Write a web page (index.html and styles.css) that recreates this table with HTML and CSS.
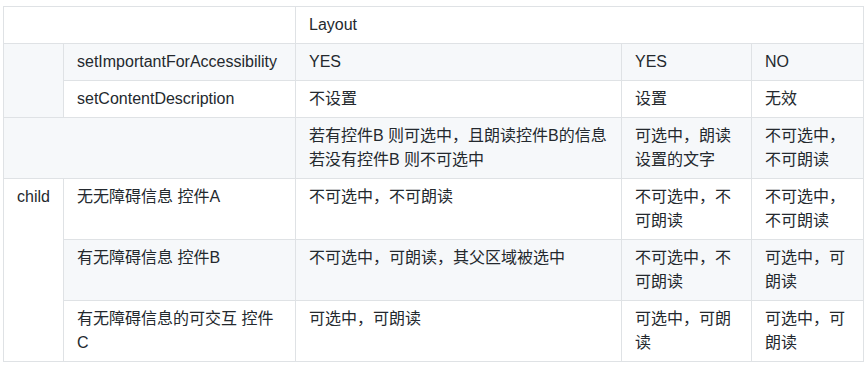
FILE: index.html
```html
<!DOCTYPE html>
<html lang="zh-CN">
<head>
<meta charset="utf-8">
<title>Accessibility table</title>
<link rel="stylesheet" href="styles.css">
</head>
<body>
<table class="grid">
  <colgroup>
    <col class="c1">
    <col class="c2">
    <col class="c3">
    <col class="c4">
    <col class="c5">
  </colgroup>
  <tbody>
    <tr>
      <td colspan="2"></td>
      <td colspan="3">Layout</td>
    </tr>
    <tr class="alt">
      <td rowspan="2"></td>
      <td>setImportantForAccessibility</td>
      <td>YES</td>
      <td>YES</td>
      <td>NO</td>
    </tr>
    <tr>
      <td>setContentDescription</td>
      <td>不设置</td>
      <td>设置</td>
      <td>无效</td>
    </tr>
    <tr class="alt">
      <td colspan="2"></td>
      <td>若有控件B 则可选中，且朗读控件B的信息<br>若没有控件B 则不可选中</td>
      <td>可选中，朗读设置的文字</td>
      <td>不可选中，不可朗读</td>
    </tr>
    <tr>
      <td rowspan="3">child</td>
      <td>无无障碍信息 控件A</td>
      <td>不可选中，不可朗读</td>
      <td>不可选中，不可朗读</td>
      <td>不可选中，不可朗读</td>
    </tr>
    <tr class="alt">
      <td>有无障碍信息 控件B</td>
      <td>不可选中，可朗读，其父区域被选中</td>
      <td>不可选中，不可朗读</td>
      <td>可选中，可朗读</td>
    </tr>
    <tr>
      <td>有无障碍信息的可交互 控件C</td>
      <td>可选中，可朗读</td>
      <td>可选中，可朗读</td>
      <td>可选中，可朗读</td>
    </tr>
  </tbody>
</table>
</body>
</html>
```

FILE: styles.css
```css
html, body {
  margin: 0;
  background: #ffffff;
}

body {
  padding: 6px 0 0 3px;
  font-family: "Liberation Sans", Arial, "Noto Sans CJK SC", sans-serif;
  font-size: 16px;
  line-height: 24px;
  color: #24292e;
}

.grid {
  border-collapse: collapse;
  border-spacing: 0;
  table-layout: fixed;
  width: 860px;
}

.c1 { width: 60px; }
.c2 { width: 232px; }
.c3 { width: 326px; }
.c4 { width: 130px; }
.c5 { width: 112px; }

.grid td {
  border: 1px solid #dfe2e5;
  padding: 6px 13px;
  vertical-align: top;
  text-align: left;
  background: #ffffff;
}

.grid tr.alt td {
  background: #f6f8fa;
}
```
